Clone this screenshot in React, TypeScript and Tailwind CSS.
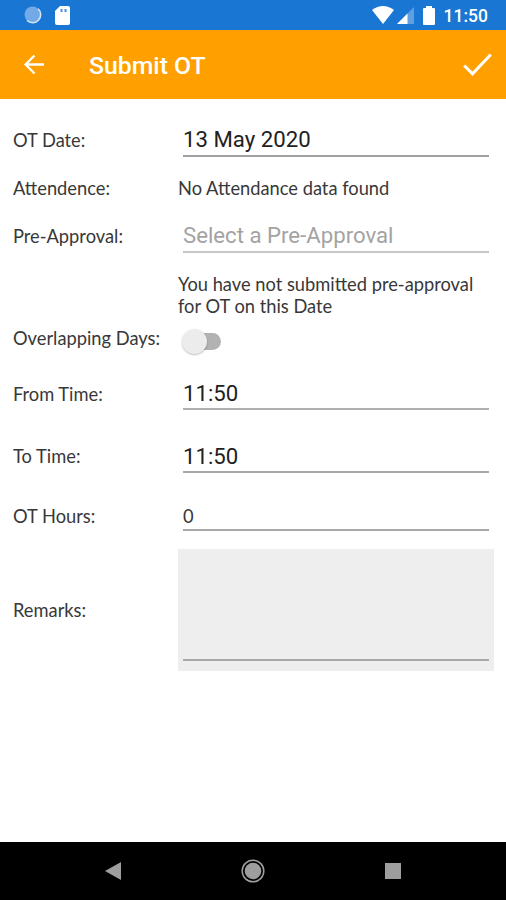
import { ReactNode } from "react";
import clsx from "clsx";

interface FormRowProps {
    label?: string;
    className?: string;
    children: ReactNode;
}
const FormRow = ({ label, className, children }: FormRowProps) => {
    return (
        <div className={clsx("flex items-center", className)}>
            <div className="w-[165px] shrink-0 whitespace-nowrap">{label}</div>
            <div className="flex h-full w-[316px] flex-col">{children}</div>
        </div>
    );
};

interface FieldProps {
    value: string;
    className?: string;
}
const Field = ({ value, className }: FieldProps) => {
    return (
        <div
            className={clsx(
                "mx-[5px] border-b-2 whitespace-nowrap",
                className
            )}
        >
            {value}
        </div>
    );
};

const StatusBar = () => {
    return (
        <div className="flex h-[30px] items-center bg-[#1976d2] pr-[18px] pl-6 text-white">
            <svg width="18" height="18" viewBox="0 0 18 18">
                <circle cx="8.5" cy="8.5" r="8" fill="#72a9e6" />
                <path d="M14.2 2.8A8 8 0 0 1 3 14.5" fill="none" stroke="#d5e6f8" strokeWidth="1.5" />
            </svg>
            <svg width="15" height="19" viewBox="0 0 15 19" className="ml-[13px]">
                <path d="M5 0h8a2 2 0 0 1 2 2v15a2 2 0 0 1-2 2H2a2 2 0 0 1-2-2V5z" fill="#fff" />
                <path d="M5.500 3h2v3h-2zM9.500 3h2v3h-2z" fill="#4b91df" />
            </svg>
            <svg width="22" height="18" viewBox="0 0 22 18" className="ml-auto">
                <path d="M0 4Q11-4 22 4L11 18z" fill="#fff" />
            </svg>
            <svg width="17" height="17" viewBox="0 0 17 17" className="mt-px ml-[3px]">
                <path d="M17 0v17H0z" fill="#5e9fe0" />
                <path d="M10.500 6.500V17H0z" fill="#fff" />
            </svg>
            <svg width="12" height="19" viewBox="0 0 12 19" className="ml-[9px]">
                <path d="M3 0h6v2h2a1 1 0 0 1 1 1v15a1 1 0 0 1-1 1H1a1 1 0 0 1-1-1V3a1 1 0 0 1 1-1h2z" fill="#fff" />
            </svg>
            <span className="mt-[3px] ml-[9px] text-[17.5px] leading-none font-medium">11:50</span>
        </div>
    );
};

const AppBar = () => {
    return (
        <div className="flex h-[69px] items-center bg-[#ffa000] pr-[14px] pl-6 text-white">
            <svg width="20" height="20" viewBox="0 0 20 20" fill="none" stroke="#fff" strokeWidth="2.3">
                <path d="M20 9.500H2M10.500 .5L1.600 9.500l8.900 9" />
            </svg>
            <h1 className="mt-[3px] ml-[45px] text-[24.800px] leading-none font-medium">Submit OT</h1>
            <svg width="29" height="23" viewBox="0 0 29 23" fill="none" stroke="#fff" strokeWidth="3" className="ml-auto">
                <path d="M1.200 12.500l8.300 8.300L27.800 1.500" />
            </svg>
        </div>
    );
};

const NavBar = () => {
    return (
        <div className="flex h-[58px] items-center bg-black pr-[105px] pl-[105px]">
            <svg width="16" height="18" viewBox="0 0 16 18">
                <path d="M0 9L16 0v18z" fill="#9e9e9e" />
            </svg>
            <svg width="24" height="24" viewBox="0 0 24 24" className="mx-auto">
                <circle cx="12" cy="12" r="8.300" fill="#9e9e9e" />
                <circle cx="12" cy="12" r="10.800" fill="none" stroke="#9e9e9e" strokeWidth="1.500" />
            </svg>
            <div className="size-4 bg-[#9e9e9e]"></div>
        </div>
    );
};

const inputText = "font-[Roboto,sans-serif] text-[22.200px] leading-7";

export default function App() {
    return (
        <div className="flex h-[900px] w-[506px] flex-col overflow-hidden bg-white font-[Roboto,sans-serif]">
            <StatusBar />
            <AppBar />

            <main className="flex-1 pt-[17px] pl-[13px] font-[Lato,sans-serif] text-[18.300px] leading-[22px] text-[#383838]">
                <FormRow label="OT Date:" className="h-12">
                    <Field value="13 May 2020" className={clsx(inputText, "mt-[9px] h-8 border-[#a0a0a0] text-[#212121]")} />
                </FormRow>
                <FormRow label="Attendence:" className="h-12">
                    <p className="my-auto">No Attendance data found</p>
                </FormRow>
                <FormRow label="Pre-Approval:" className="h-12">
                    <Field value="Select a Pre-Approval" className={clsx(inputText, "mt-[9px] h-8 border-[#c8c8c8] text-[#a3a3a3]")} />
                </FormRow>
                <FormRow className="h-[57px]">
                    <p className="mt-[13px] whitespace-nowrap">
                        You have not submitted pre-approval
                        <br />
                        for OT on this Date
                    </p>
                </FormRow>
                <FormRow label="Overlapping Days:" className="h-[42px]">
                    <div className="mt-[11px] ml-1 flex h-[26px] items-center">
                        <div className="z-10 size-[25px] rounded-full bg-[#ececec] shadow-[0_1px_2px_rgba(0,0,0,0.25)]"></div>
                        <div className="-ml-4 h-[17px] w-[30px] rounded-full bg-[#b2b2b2]"></div>
                    </div>
                </FormRow>
                <FormRow label="From Time:" className="mt-1 h-[62px]">
                    <Field value="11:50" className={clsx(inputText, "mt-4 h-[31px] border-[#b0b0b0] text-[#212121]")} />
                </FormRow>
                <FormRow label="To Time:" className="h-[62px]">
                    <Field value="11:50" className={clsx(inputText, "mt-[17px] h-[31px] border-[#a8a8a8] text-[#212121]")} />
                </FormRow>
                <FormRow label="OT Hours:" className="h-[58px]">
                    <Field value="0" className="mt-[18px] h-[26px] border-[#a8a8a8]" />
                </FormRow>
                <FormRow label="Remarks:" className="mt-1 h-[122px]">
                    <div className="flex h-full flex-col justify-end bg-[#eee] pb-[10px]">
                        <Field value="" className="border-[#a8a8a8]" />
                    </div>
                </FormRow>
            </main>

            <NavBar />
        </div>
    );
}
